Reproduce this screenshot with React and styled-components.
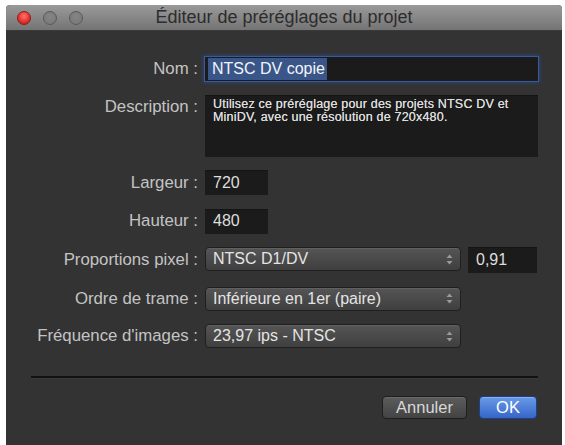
import React from "react";
import styled, { createGlobalStyle } from "styled-components";

const GlobalStyle = createGlobalStyle`
  html, body {
    margin: 0;
    padding: 0;
    background: #ffffff;
    font-family: "Liberation Sans", Arial, sans-serif;
  }
`;

export const Window = styled.div`
  margin: 5px 0 0 6px;
  width: 556px;
  height: 440px;
  background: #333333;
  border-top-right-radius: 4px;
  border-top-left-radius: 4px;
  overflow: hidden;
`;

export const TitleBar = styled.div`
  display: grid;
  grid-template-columns: 1fr auto 1fr;
  align-items: center;
  height: 26px;
  background: linear-gradient(#9a9a9a, #747474);
  border-bottom: 1px solid #3a3a3a;
  box-sizing: border-box;
`;

export const Lights = styled.div`
  display: flex;
  gap: 12px;
  padding-left: 11px;
`;

export const Light = styled.span`
  width: 14px;
  height: 14px;
  border-radius: 50%;
  box-sizing: border-box;
  background: ${(p) =>
    p.$red
      ? "radial-gradient(circle at 50% 35%, #ff7468, #e0302a 60%, #a8181a)"
      : "radial-gradient(circle at 50% 40%, #858585, #767676)"};
  border: 1px solid ${(p) => (p.$red ? "#8e1a16" : "#5a5a5a")};
`;

export const Title = styled.div`
  font-size: 18px;
  color: #2c2c2c;
  white-space: nowrap;
`;

export const Body = styled.div`
  padding: 26px 24px 0 25px;
`;

export const Form = styled.div`
  display: grid;
  grid-template-columns: 167px 333px;
  column-gap: 7px;
  row-gap: 13.5px;
`;

export const Label = styled.div`
  text-align: right;
  font-size: 16.8px;
  color: #c4c4c4;
  white-space: nowrap;
  align-self: ${(p) => (p.$top ? "start" : "center")};
  line-height: ${(p) => (p.$top ? "24px" : "normal")};
`;

export const Field = styled.div`
  box-sizing: border-box;
  width: ${(p) => p.$w || "100%"};
  height: ${(p) => p.$h || "25px"};
  background: #1b1b1b;
  box-shadow: inset 0 1px 0 #141414;
  color: #dedede;
  font-size: 16px;
  display: flex;
  align-items: center;
  padding-left: 8px;
`;

export const FocusField = styled(Field)`
  height: 24px;
  padding-left: 3px;
  box-shadow: 0 0 0 1px #3b5a9a, 0 0 3px 2px #2a4276;
`;

export const Selected = styled.span`
  background: #3a5688;
  color: #f2f4fa;
  padding: 2px 2px 2px 4px;
`;

export const TextArea = styled(Field)`
  height: 62px;
  align-items: flex-start;
  font-size: 12.5px;
  letter-spacing: 0.2px;
  line-height: 13.5px;
  padding: 3px 8px 0 8px;
  color: #dcdcdc;
  text-shadow: 0 0 0.5px #dcdcdc;
`;

export const Inline = styled.div`
  display: flex;
  gap: 7px;
`;

export const Select = styled.div`
  box-sizing: border-box;
  width: 256px;
  height: 24px;
  border-radius: 4px;
  border: 1px solid #1f1f1f;
  background: linear-gradient(#555555, #3f3f3f);
  box-shadow: inset 0 1px 0 #616161;
  display: flex;
  align-items: center;
  justify-content: space-between;
  padding: 0 7px 0 7px;
  color: #e4e4e4;
  font-size: 16px;
`;

export const Separator = styled.div`
  margin-top: 28px;
  height: 2px;
  background: #121212;
  border-bottom: 1px solid #3a3a3a;
`;

export const Buttons = styled.div`
  display: flex;
  justify-content: flex-end;
  gap: 12px;
  margin-top: 17px;
  padding-right: 1px;
`;

export const Button = styled.div`
  box-sizing: border-box;
  height: 23px;
  width: ${(p) => p.$w};
  border-radius: 4px;
  display: flex;
  align-items: center;
  justify-content: center;
  font-size: 16.5px;
  color: ${(p) => (p.$primary ? "#ffffff" : "#d8d8d8")};
  border: 1px solid ${(p) => (p.$primary ? "#1f3f86" : "#1e1e1e")};
  background: ${(p) =>
    p.$primary
      ? "linear-gradient(#6a9ae6, #3566c9)"
      : "linear-gradient(#5c5c5c, #434343)"};
  box-shadow: inset 0 1px 0 ${(p) => (p.$primary ? "#86b0f0" : "#6a6a6a")};
`;

const Stepper = () => (
  <svg width="7" height="11" viewBox="0 0 7 11">
    <path d="M3.5 0.5 L6.5 4 L0.5 4 Z" fill="#9a9a9a" />
    <path d="M3.5 10.5 L6.5 7 L0.5 7 Z" fill="#9a9a9a" />
  </svg>
);

const Dropdown = ({ value }) => (
  <Select>
    <span>{value}</span>
    <Stepper />
  </Select>
);

export default function App() {
  return (
    <>
      <GlobalStyle />
      <Window>
        <TitleBar>
          <Lights>
            <Light $red />
            <Light />
            <Light />
          </Lights>
          <Title>Éditeur de préréglages du projet</Title>
          <div />
        </TitleBar>
        <Body>
          <Form>
            <Label>Nom :</Label>
            <FocusField>
              <Selected>NTSC DV copie</Selected>
            </FocusField>

            <Label $top>Description :</Label>
            <TextArea>
              Utilisez ce préréglage pour des projets NTSC DV et MiniDV, avec une résolution de 720x480.
            </TextArea>

            <Label>Largeur :</Label>
            <Field $w="63px">720</Field>

            <Label>Hauteur :</Label>
            <Field $w="63px">480</Field>

            <Label>Proportions pixel :</Label>
            <Inline>
              <Dropdown value="NTSC D1/DV" />
              <Field $w="69px" $h="26px">0,91</Field>
            </Inline>

            <Label>Ordre de trame :</Label>
            <Dropdown value="Inférieure en 1er (paire)" />

            <Label>Fréquence d'images :</Label>
            <Dropdown value="23,97 ips - NTSC" />
          </Form>
          <Separator />
          <Buttons>
            <Button $w="85px">Annuler</Button>
            <Button $w="58px" $primary>
              OK
            </Button>
          </Buttons>
        </Body>
      </Window>
    </>
  );
}
